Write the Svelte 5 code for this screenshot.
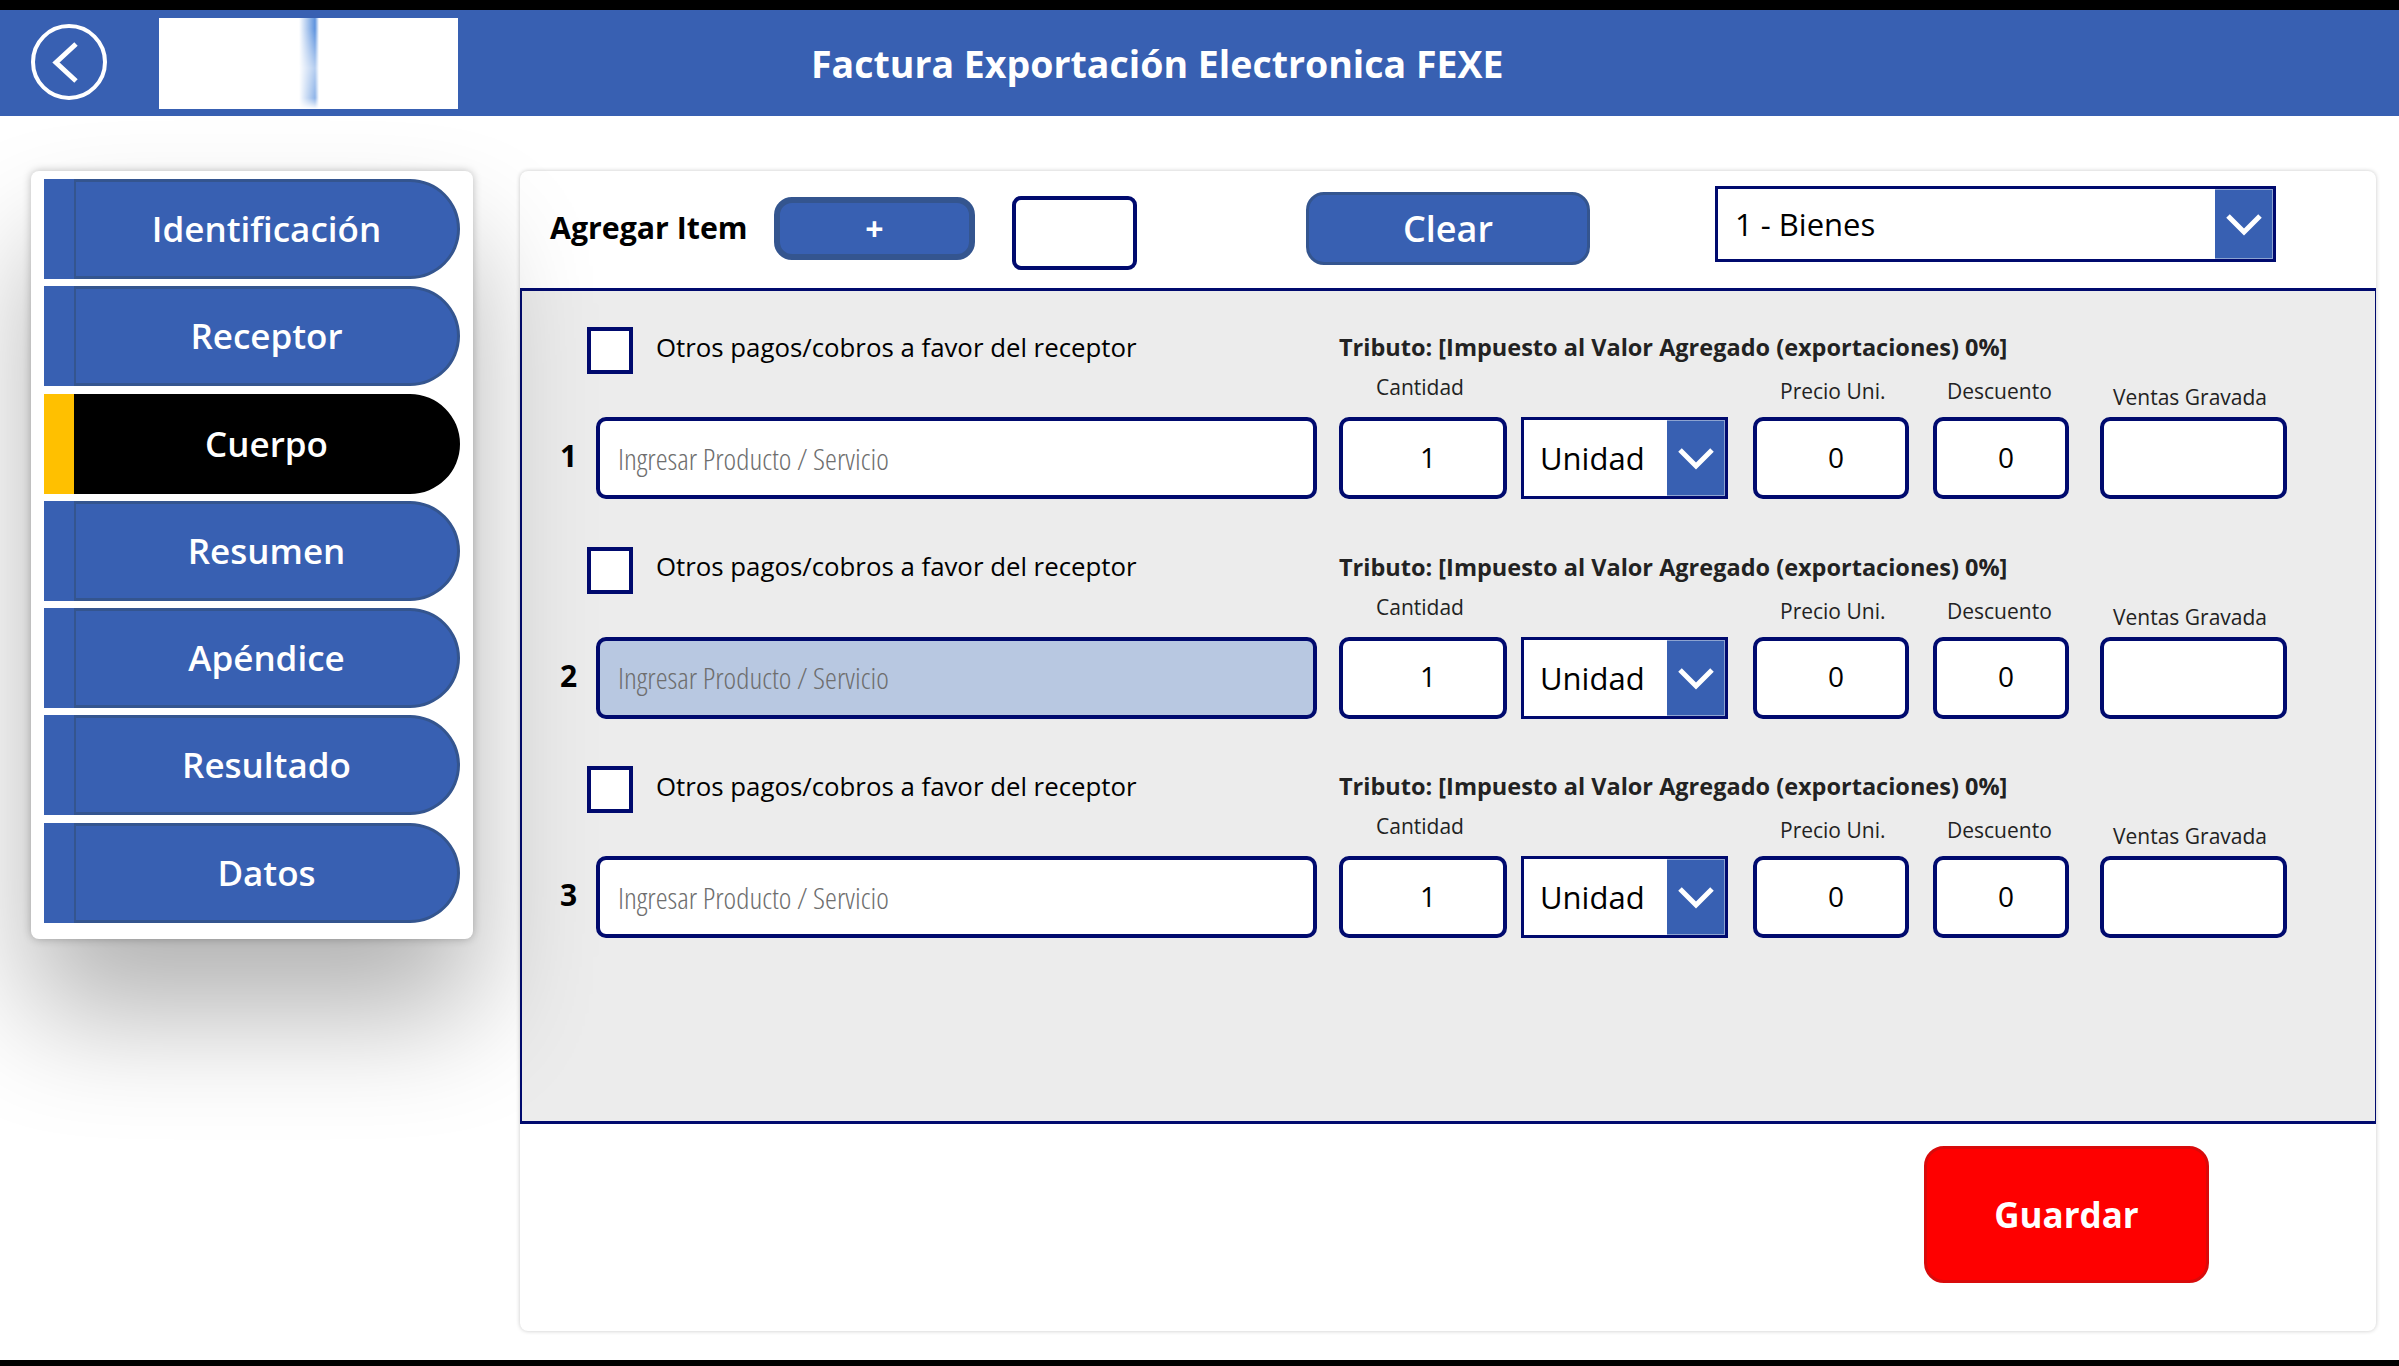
<script lang="ts">
  const navItems = ['Identificación', 'Receptor', 'Cuerpo', 'Resumen', 'Apéndice', 'Resultado', 'Datos'];
  const activeItem = 'Cuerpo';
  const rows = [
    { n: 1, disabled: false },
    { n: 2, disabled: true },
    { n: 3, disabled: false }
  ];
</script>

{#snippet chevron()}
  <svg viewBox="0 0 36 24" width="36" height="24" aria-hidden="true">
    <path d="M2 4 L18 20 L34 4" fill="none" stroke="#fff" stroke-width="5" />
  </svg>
{/snippet}

<div class="screen">
  <header class="topbar">
    <button class="back" aria-label="Volver">
      <svg viewBox="0 0 76 76" width="76" height="76" aria-hidden="true">
        <circle cx="38" cy="38" r="36" fill="none" stroke="#fff" stroke-width="4" />
        <path d="M45 20 L25 38.5 L45 57" fill="none" stroke="#fff" stroke-width="5" />
      </svg>
    </button>
    <div class="logo"><span class="smear"></span></div>
    <h1>Factura Exportación Electronica FEXE</h1>
  </header>

  <div class="body">
    <nav class="sidebar">
      {#each navItems as item}
        <button class="nav" class:active={item === activeItem}>
          <span class="tab"></span>
          <span class="pill">{item}</span>
        </button>
      {/each}
    </nav>

    <main class="card">
      <div class="toolbar">
        <span class="add-label">Agregar Item</span>
        <button class="add">+</button>
        <div class="box"></div>
        <button class="clear">Clear</button>
        <div class="select big">
          <span>1 - Bienes</span>
          <span class="arrow">{@render chevron()}</span>
        </div>
      </div>

      <section class="panel">
        {#each rows as row}
          <div class="row">
            <div class="check-line">
              <span class="check"></span>
              <span class="check-text">Otros pagos/cobros a favor del receptor</span>
            </div>
            <div class="tributo">Tributo: [Impuesto al Valor Agregado (exportaciones) 0%]</div>

            <span class="num">{row.n}</span>
            <div class="field product" class:disabled={row.disabled}>Ingresar Producto / Servicio</div>
            <div class="col qty">
              <span class="cap">Cantidad</span>
              <div class="field value">1</div>
            </div>
            <div class="select unit">
              <span>Unidad</span>
              <span class="arrow">{@render chevron()}</span>
            </div>
            <div class="col price">
              <span class="cap">Precio Uni.</span>
              <div class="field value">0</div>
            </div>
            <div class="col disc">
              <span class="cap">Descuento</span>
              <div class="field value">0</div>
            </div>
            <div class="col sales">
              <span class="cap">Ventas Gravada</span>
              <div class="field value"></div>
            </div>
          </div>
        {/each}
      </section>

      <div class="footer">
        <button class="save">Guardar</button>
      </div>
    </main>
  </div>
</div>

<style>
  :global(body) {
    margin: 0;
    background: #fff;
  }
  .screen {
    width: 2399px;
    height: 1366px;
    box-sizing: border-box;
    border-top: 10px solid #000;
    border-bottom: 6px solid #000;
    overflow: hidden;
    font-family: 'Open Sans', 'Noto Sans', sans-serif;
    color: #000;
    display: flex;
    flex-direction: column;
  }
  button {
    font-family: inherit;
    padding: 0;
    cursor: pointer;
  }
  .topbar {
    height: 106px;
    flex: none;
    background: #3860b2;
    display: flex;
    align-items: center;
    padding-left: 31px;
  }
  .back {
    width: 76px;
    height: 76px;
    margin-top: -2px;
    background: none;
    border: none;
    display: flex;
  }
  .logo {
    width: 299px;
    height: 91px;
    margin-left: 52px;
    background: #fff;
    display: flex;
    justify-content: center;
  }
  .smear {
    width: 20px;
    background: linear-gradient(90deg, #fff, #5f94de 80%, #fff);
    mask-image: linear-gradient(to bottom, #000 0%, #000 12%, rgba(0, 0, 0, 0.45) 55%, rgba(0, 0, 0, 0.7) 88%, transparent 100%);
  }
  h1 {
    margin: 0 0 0 353px;
    font-size: 37.5px;
    font-weight: 700;
    color: #fff;
    white-space: nowrap;
  }
  .body {
    flex: 1;
    display: flex;
    align-items: flex-start;
    padding: 55px 0 0 31px;
  }
  .sidebar {
    position: relative;
    z-index: 1;
    width: 442px;
    height: 768px;
    box-sizing: border-box;
    padding: 8px 0 0 13px;
    background: #fff;
    border-radius: 8px;
    box-shadow: 0 0 8px rgba(0, 0, 0, 0.25), 0 75px 120px rgba(0, 0, 0, 0.3);
    display: flex;
    flex-direction: column;
    gap: 7.3px;
    flex: none;
  }
  .nav {
    width: 416px;
    height: 100px;
    flex: none;
    border: none;
    background: none;
    display: flex;
    font-size: 35px;
    font-weight: 600;
    color: #fff;
  }
  .tab {
    width: 30px;
    background: #3860b2;
  }
  .pill {
    flex: 1;
    box-sizing: border-box;
    height: 100%;
    padding-bottom: 1px;
    background: #3860b2;
    border: 3px solid #34558f;
    border-left-width: 2px;
    border-radius: 0 50px 50px 0;
    display: flex;
    align-items: center;
    justify-content: center;
  }
  .nav.active .tab {
    background: #ffc000;
  }
  .nav.active .pill {
    background: #000;
    border-color: #000;
  }
  .card {
    width: 1856px;
    height: 1160px;
    margin-left: 47px;
    background: #fff;
    border-radius: 8px;
    box-shadow: 0 0 4px rgba(0, 0, 0, 0.22);
    display: flex;
    flex-direction: column;
    overflow: hidden;
  }
  .toolbar {
    height: 117px;
    flex: none;
    display: flex;
    align-items: flex-start;
    padding-left: 30px;
    box-sizing: border-box;
  }
  .add-label {
    width: 224px;
    margin-top: 36px;
    font-size: 30.3px;
    font-weight: 700;
    white-space: nowrap;
  }
  .add {
    width: 201px;
    height: 63px;
    margin-top: 26px;
    box-sizing: border-box;
    background: #3860b2;
    border: 6px solid #34558f;
    border-radius: 18px;
    color: #fff;
    font-size: 32px;
    font-weight: 700;
  }
  .box {
    width: 125px;
    height: 74px;
    margin: 25px 0 0 37px;
    box-sizing: border-box;
    background: #fff;
    border: 4px solid #000a6e;
    border-radius: 9px;
  }
  .clear {
    width: 284px;
    height: 73px;
    margin: 21px 0 0 169px;
    box-sizing: border-box;
    background: #3860b2;
    border: 3px solid #34558f;
    border-radius: 18px;
    color: #fff;
    font-size: 36px;
    font-weight: 600;
  }
  .select {
    display: flex;
    box-sizing: border-box;
    background: #fff;
    border: 3px solid #000a6e;
    align-items: center;
    font-size: 31px;
    justify-content: space-between;
  }
  .select.big {
    width: 561px;
    height: 76px;
    margin: 15px 0 0 125px;
    padding-left: 17px;
  }
  .select.unit {
    width: 207px;
    height: 82px;
    padding-left: 16px;
    align-self: end;
  }
  .arrow {
    width: 58px;
    box-sizing: border-box;
    align-self: stretch;
    background: #3860b2;
    border: 1px solid #8ca3d0;
    border-left: none;
    display: flex;
    align-items: center;
    justify-content: center;
  }
  .panel {
    height: 836px;
    flex: none;
    box-sizing: border-box;
    background: #ececec;
    border: solid #000a6e;
    border-width: 3px 1px 3px 2px;
    padding-top: 36px;
  }
  .row {
    height: 219.5px;
    box-sizing: border-box;
    padding-left: 38px;
    display: grid;
    grid-template-columns: 36px 721px 204px 207px 181px 160px 218px;
    grid-template-rows: 47px 82px;
    row-gap: 43px;
  }
  .check-line {
    grid-column: 1 / 3;
    display: flex;
    align-items: center;
    padding-left: 27px;
    gap: 23px;
  }
  .check {
    width: 46px;
    height: 47px;
    box-sizing: border-box;
    background: #fff;
    border: 4px solid #000a6e;
  }
  .check-text {
    font-size: 25.8px;
    white-space: nowrap;
    margin-top: -8px;
  }
  .tributo {
    grid-column: 3 / -1;
    margin-left: 22px;
    font-size: 23.5px;
    font-weight: 700;
    white-space: nowrap;
    color: #222;
    align-self: center;
    margin-top: -7px;
  }
  .num {
    font-size: 30px;
    font-weight: 700;
    align-self: center;
    margin-top: -5px;
  }
  .field {
    box-sizing: border-box;
    height: 82px;
    flex: none;
    background: #fff;
    border: 4px solid #000a6e;
    border-radius: 10px;
    display: flex;
    align-items: center;
  }
  .product {
    padding-left: 18px;
    font-size: 30.1px;
    font-weight: 300;
    font-stretch: 75%;
    color: #6e6e6e;
  }
  .product.disabled {
    background: #b8c8e1;
  }
  .col {
    display: flex;
    flex-direction: column;
    justify-content: flex-end;
  }
  .cap {
    flex: none;
    font-size: 21px;
    white-space: nowrap;
    color: #222;
  }
  .qty {
    margin: 0 14px 0 22px;
  }
  .qty .cap {
    margin: 0 0 16px 37px;
  }
  .price {
    margin-left: 25px;
  }
  .price .cap {
    margin: 0 0 12px 27px;
  }
  .disc {
    margin-left: 24px;
  }
  .disc .cap {
    margin: 0 0 12px 14px;
  }
  .sales {
    margin-left: 31px;
  }
  .sales .cap {
    margin: 0 0 6px 13px;
  }
  .value {
    font-size: 28px;
    justify-content: center;
    padding: 0 0 3px 10px;
  }
  .footer {
    flex: 1;
    padding: 22px 0 0 1404px;
  }
  .save {
    width: 285px;
    height: 137px;
    box-sizing: border-box;
    background: #fe0000;
    border: 3px solid #d90a0a;
    border-radius: 20px;
    color: #fff;
    font-size: 35px;
    font-weight: 700;
  }
</style>
